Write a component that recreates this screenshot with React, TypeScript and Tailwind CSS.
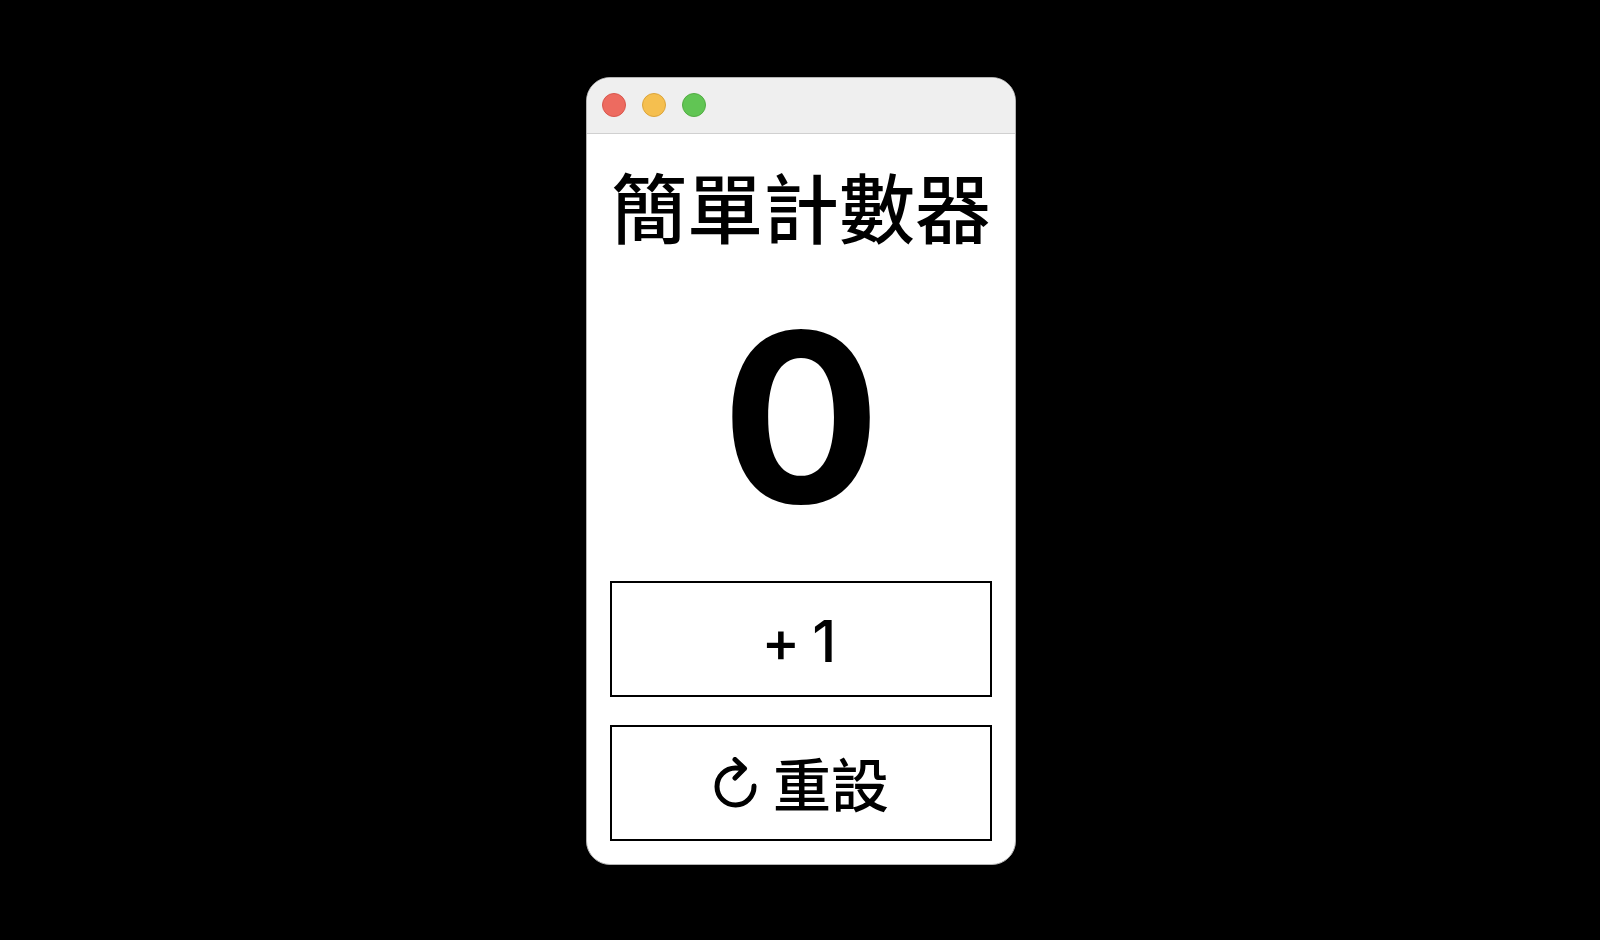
import { useState } from 'react';

const lights = [
  { label: 'Close', color: 'bg-[#ed6b60] border-[#d8574d]' },
  { label: 'Minimize', color: 'bg-[#f5bf4f] border-[#dba43b]' },
  { label: 'Zoom', color: 'bg-[#61c554] border-[#52ac43]' },
];

export default function App() {
  const [count, setCount] = useState(0);

  return (
    <div className="min-h-screen pt-0.5 pl-0.5 flex items-center justify-center bg-black text-black font-['Inter','Noto_Sans_CJK_TC',sans-serif]">
      <main className="w-full max-w-[430px] bg-white border border-[#b4b4b4] rounded-3xl overflow-hidden">
        <header className="px-[15px] pt-[15px] pb-4 flex items-center gap-4 bg-[#efefef] border-b border-[#d0d0d0]">
          {lights.map((light) => (
            <button key={light.label} aria-label={light.label} className={`size-6 rounded-full border ${light.color}`} />
          ))}
        </header>
        <div className="px-[23px] pt-6 pb-[23px] flex flex-col">
          <h1 className="text-center text-[76px] leading-[104px] font-medium whitespace-nowrap">簡單計數器</h1>
          <output className="text-center text-[236px] leading-[311px] font-bold">{count}</output>
          <div className="mt-2 flex flex-col gap-7">
            <button
              onClick={() => setCount(count + 1)}
              className="h-[116px] pt-1 pr-1 flex items-center justify-center gap-3 border-2 border-black text-[58px] font-medium"
            >
              <span>+</span>
              <span>1</span>
            </button>
            <button
              onClick={() => setCount(0)}
              className="h-[116px] flex items-center justify-center gap-4 border-2 border-black text-[58px] font-medium"
            >
              <svg viewBox="0 0 44 52" className="w-11 h-13" fill="none" stroke="currentColor" strokeWidth="5" strokeLinecap="round" strokeLinejoin="round">
                <path d="M41 29A18.500 18.500 0 1 1 22.500 11Q27 11 31.500 11.500M22 2.500L31.500 11.500L22 21" />
              </svg>
              <span className="pt-1.5">重設</span>
            </button>
          </div>
        </div>
      </main>
    </div>
  );
}
